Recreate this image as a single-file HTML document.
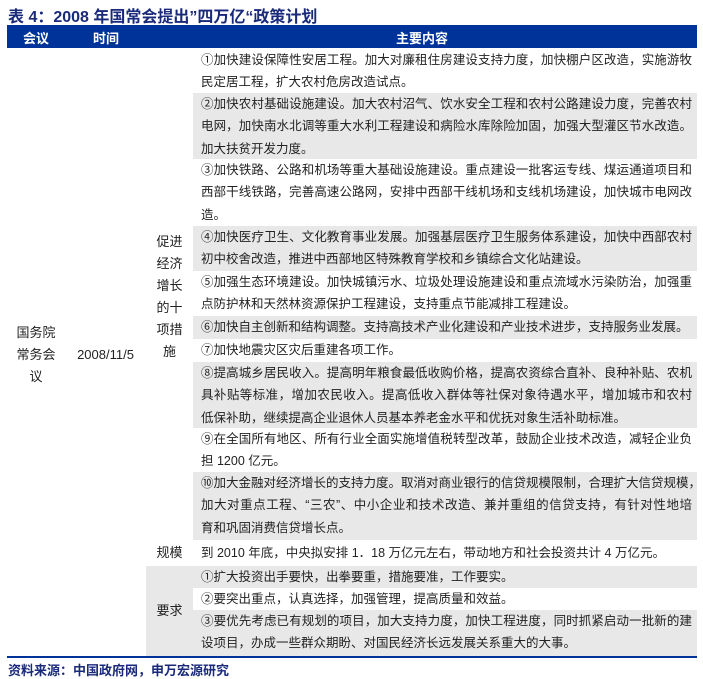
<!DOCTYPE html>
<html><head><meta charset="utf-8"><style>
*{margin:0;padding:0;box-sizing:border-box}
body{width:703px;height:679px;background:#fff;position:relative;font-family:"Liberation Sans","Noto Sans CJK SC",sans-serif;color:#222;font-size:13px;overflow:hidden}
.t{position:absolute;left:8px;top:3px;font-size:16px;font-weight:bold;color:#1a2a7a}
.hd{position:absolute;left:7px;top:25px;width:690px;height:23px;background:#003399;color:#fff;font-weight:bold;font-size:13px}
.hd span{position:absolute;top:3px}
.r{position:absolute;left:193px;width:504px;padding:0 5px 0 8px;line-height:22.3px;font-size:12.5px}
.g{background:#e8e8e8}
.r div{text-align:justify;text-align-last:justify;white-space:nowrap;overflow:visible}
.r div:last-child{text-align-last:left}
.c{position:absolute;text-align:center;line-height:22px}
.bl{position:absolute;left:7px;top:656px;width:690px;height:2px;background:#003399}
.src{position:absolute;left:8px;top:660px;font-size:13px;font-weight:bold;color:#1a2a7a}
</style></head><body>
<div class="t">表 4：2008 年国常会提出”四万亿“政策计划</div>
<div class="hd"><span style="left:16px">会议</span><span style="left:86px">时间</span><span style="left:389px">主要内容</span></div>

<div class="r" style="top:49px;height:44px"><div>①加快建设保障性安居工程。加大对廉租住房建设支持力度，加快棚户区改造，实施游牧</div><div>民定居工程，扩大农村危房改造试点。</div></div>
<div class="r g" style="top:93px;height:66px"><div>②加快农村基础设施建设。加大农村沼气、饮水安全工程和农村公路建设力度，完善农村</div><div>电网，加快南水北调等重大水利工程建设和病险水库除险加固，加强大型灌区节水改造。</div><div>加大扶贫开发力度。</div></div>
<div class="r" style="top:159px;height:67px"><div>③加快铁路、公路和机场等重大基础设施建设。重点建设一批客运专线、煤运通道项目和</div><div>西部干线铁路，完善高速公路网，安排中西部干线机场和支线机场建设，加快城市电网改</div><div>造。</div></div>
<div class="r g" style="top:226px;height:45px"><div>④加快医疗卫生、文化教育事业发展。加强基层医疗卫生服务体系建设，加快中西部农村</div><div>初中校舍改造，推进中西部地区特殊教育学校和乡镇综合文化站建设。</div></div>
<div class="r" style="top:271px;height:45px"><div>⑤加强生态环境建设。加快城镇污水、垃圾处理设施建设和重点流域水污染防治，加强重</div><div>点防护林和天然林资源保护工程建设，支持重点节能减排工程建设。</div></div>
<div class="r g" style="top:316px;height:23px"><div>⑥加快自主创新和结构调整。支持高技术产业化建设和产业技术进步，支持服务业发展。</div></div>
<div class="r" style="top:339px;height:23px"><div>⑦加快地震灾区灾后重建各项工作。</div></div>
<div class="r g" style="top:362px;height:66px"><div>⑧提高城乡居民收入。提高明年粮食最低收购价格，提高农资综合直补、良种补贴、农机</div><div>具补贴等标准，增加农民收入。提高低收入群体等社保对象待遇水平，增加城市和农村</div><div>低保补助，继续提高企业退休人员基本养老金水平和优抚对象生活补助标准。</div></div>
<div class="r" style="top:428px;height:44px"><div>⑨在全国所有地区、所有行业全面实施增值税转型改革，鼓励企业技术改造，减轻企业负</div><div>担 1200 亿元。</div></div>
<div class="r g" style="top:472px;height:68px"><div>⑩加大金融对经济增长的支持力度。取消对商业银行的信贷规模限制，合理扩大信贷规模，</div><div>加大对重点工程、“三农”、中小企业和技术改造、兼并重组的信贷支持，有针对性地培</div><div>育和巩固消费信贷增长点。</div></div>
<div class="r" style="top:541px;height:25px;padding-top:1px"><div>到 2010 年底，中央拟安排 1．18 万亿元左右，带动地方和社会投资共计 4 万亿元。</div></div>
<div class="g" style="position:absolute;left:146px;top:566px;width:47px;height:90px"></div>
<div class="r g" style="top:566px;height:22px"><div>①扩大投资出手要快，出拳要重，措施要准，工作要实。</div></div>
<div class="r" style="top:588px;height:22px"><div>②要突出重点，认真选择，加强管理，提高质量和效益。</div></div>
<div class="r g" style="top:610px;height:46px"><div>③要优先考虑已有规划的项目，加大支持力度，加快工程进度，同时抓紧启动一批新的建</div><div>设项目，办成一些群众期盼、对国民经济长远发展关系重大的大事。</div></div>

<div class="c" style="left:7px;width:58px;top:322px">国务院<br>常务会<br>议</div>
<div class="c" style="left:65px;width:81px;top:344px">2008/11/5</div>
<div class="c" style="left:146px;width:47px;top:231px">促进<br>经济<br>增长<br>的十<br>项措<br>施</div>
<div class="c" style="left:146px;width:47px;top:542px">规模</div>
<div class="c" style="left:146px;width:47px;top:600px">要求</div>
<div class="bl"></div>
<div class="src">资料来源：中国政府网，申万宏源研究</div>
</body></html>
